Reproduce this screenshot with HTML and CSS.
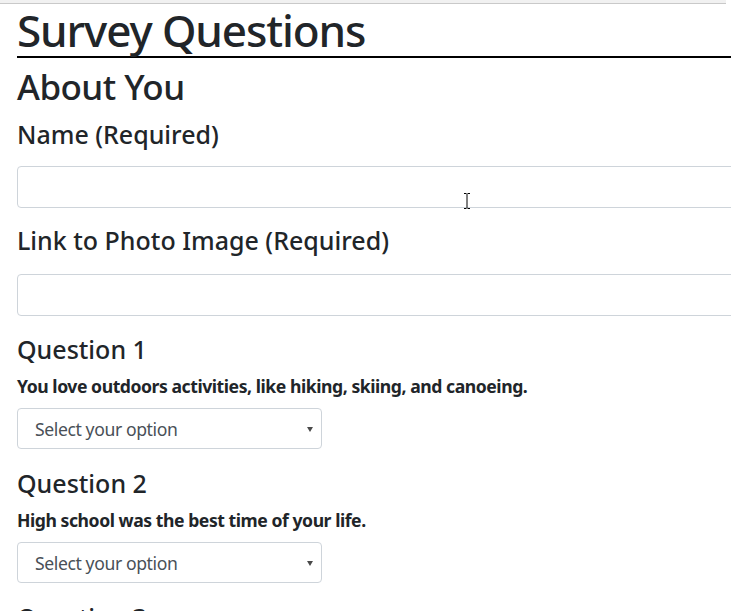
FILE: index.html
```html
<!DOCTYPE html>
<html lang="en">
<head>
<meta charset="utf-8">
<title>Survey Questions</title>
<link rel="stylesheet" href="styles.css">
</head>
<body>
<div class="topbar"></div>
<main class="page">
  <h1 class="title">Survey Questions</h1>
  <h2 class="section">About You</h2>

  <div class="field field-first">
    <label class="label" for="name">Name (Required)</label>
    <div class="input-wrap">
      <input class="input" id="name" type="text">
      <svg class="cursor" width="6" height="16" viewBox="0 0 6 16" aria-hidden="true">
        <path d="M0 0.5h2.5M3.5 0.5h2.5M3 1v14M0 15.5h2.5M3.5 15.5h2.5" stroke="#000" stroke-width="1" fill="none"/>
      </svg>
    </div>
  </div>

  <div class="field field-second">
    <label class="label" for="photo">Link to Photo Image (Required)</label>
    <div class="input-wrap">
      <input class="input" id="photo" type="text">
    </div>
  </div>

  <div class="question">
    <h4 class="label">Question 1</h4>
    <p class="prompt">You love outdoors activities, like hiking, skiing, and canoeing.</p>
    <div class="select-wrap">
      <select class="select">
        <option>Select your option</option>
      </select>
    </div>
  </div>

  <div class="question">
    <h4 class="label">Question 2</h4>
    <p class="prompt">High school was the best time of your life.</p>
    <div class="select-wrap">
      <select class="select">
        <option>Select your option</option>
      </select>
    </div>
  </div>

  <div class="question">
    <h4 class="label">Question 3</h4>
  </div>
</main>
</body>
</html>
```

FILE: styles.css
```css
html, body {
  margin: 0;
  padding: 0;
  background: #fff;
}

body {
  font-family: "Noto Sans", "Open Sans", sans-serif;
  color: #212529;
  overflow: hidden;
  height: 611px;
}

.topbar {
  width: 726px;
  height: 3px;
  background: #f1f1f1;
  border-bottom: 1px solid #c9c9c9;
}

.page {
  width: 780px;
  padding-left: 17px;
}

.title {
  margin: 0;
  font-size: 44px;
  line-height: 52px;
  font-weight: 500;
  letter-spacing: -1.1px;
  border-bottom: 2px solid #000;
}

.section {
  margin: 8px 0 0;
  font-size: 35px;
  line-height: 42px;
  font-weight: 500;
  letter-spacing: -0.55px;
}

.label {
  display: block;
  margin: 0;
  font-size: 25px;
  line-height: 29px;
  font-weight: 500;
}

.field-first {
  margin-top: 12px;
}

.field-second {
  margin-top: 18px;
}

.input-wrap {
  position: relative;
  margin-top: 17px;
}

.field-second .input-wrap {
  margin-top: 19px;
}

.input {
  display: block;
  box-sizing: border-box;
  width: 100%;
  height: 42px;
  margin: 0;
  padding: 0 13px;
  border: 1px solid #ced4da;
  border-radius: 4px;
  background: #fff;
  font: inherit;
  font-size: 17.6px;
  color: #495057;
}

.cursor {
  position: absolute;
  left: 447px;
  top: 27px;
}

.question {
  margin-top: 19px;
}

.question + .question {
  margin-top: 20px;
}

.prompt {
  margin: 9px 0 0;
  font-size: 17.6px;
  line-height: 26px;
  font-weight: 700;
  letter-spacing: -0.45px;
}

.select-wrap {
  position: relative;
  width: 305px;
  margin-top: 9px;
}

.select-wrap::after {
  content: "";
  position: absolute;
  right: 9px;
  top: 19px;
  border-left: 3px solid transparent;
  border-right: 3px solid transparent;
  border-top: 5px solid #4a4a4a;
  pointer-events: none;
}

.select {
  display: block;
  box-sizing: border-box;
  width: 305px;
  height: 41px;
  margin: 0;
  padding: 0 20px 0 17px;
  border: 1px solid #ced4da;
  border-radius: 4px;
  background: #fff;
  font: inherit;
  font-size: 17.6px;
  letter-spacing: -0.4px;
  color: #495057;
  -webkit-appearance: none;
  appearance: none;
}
```
